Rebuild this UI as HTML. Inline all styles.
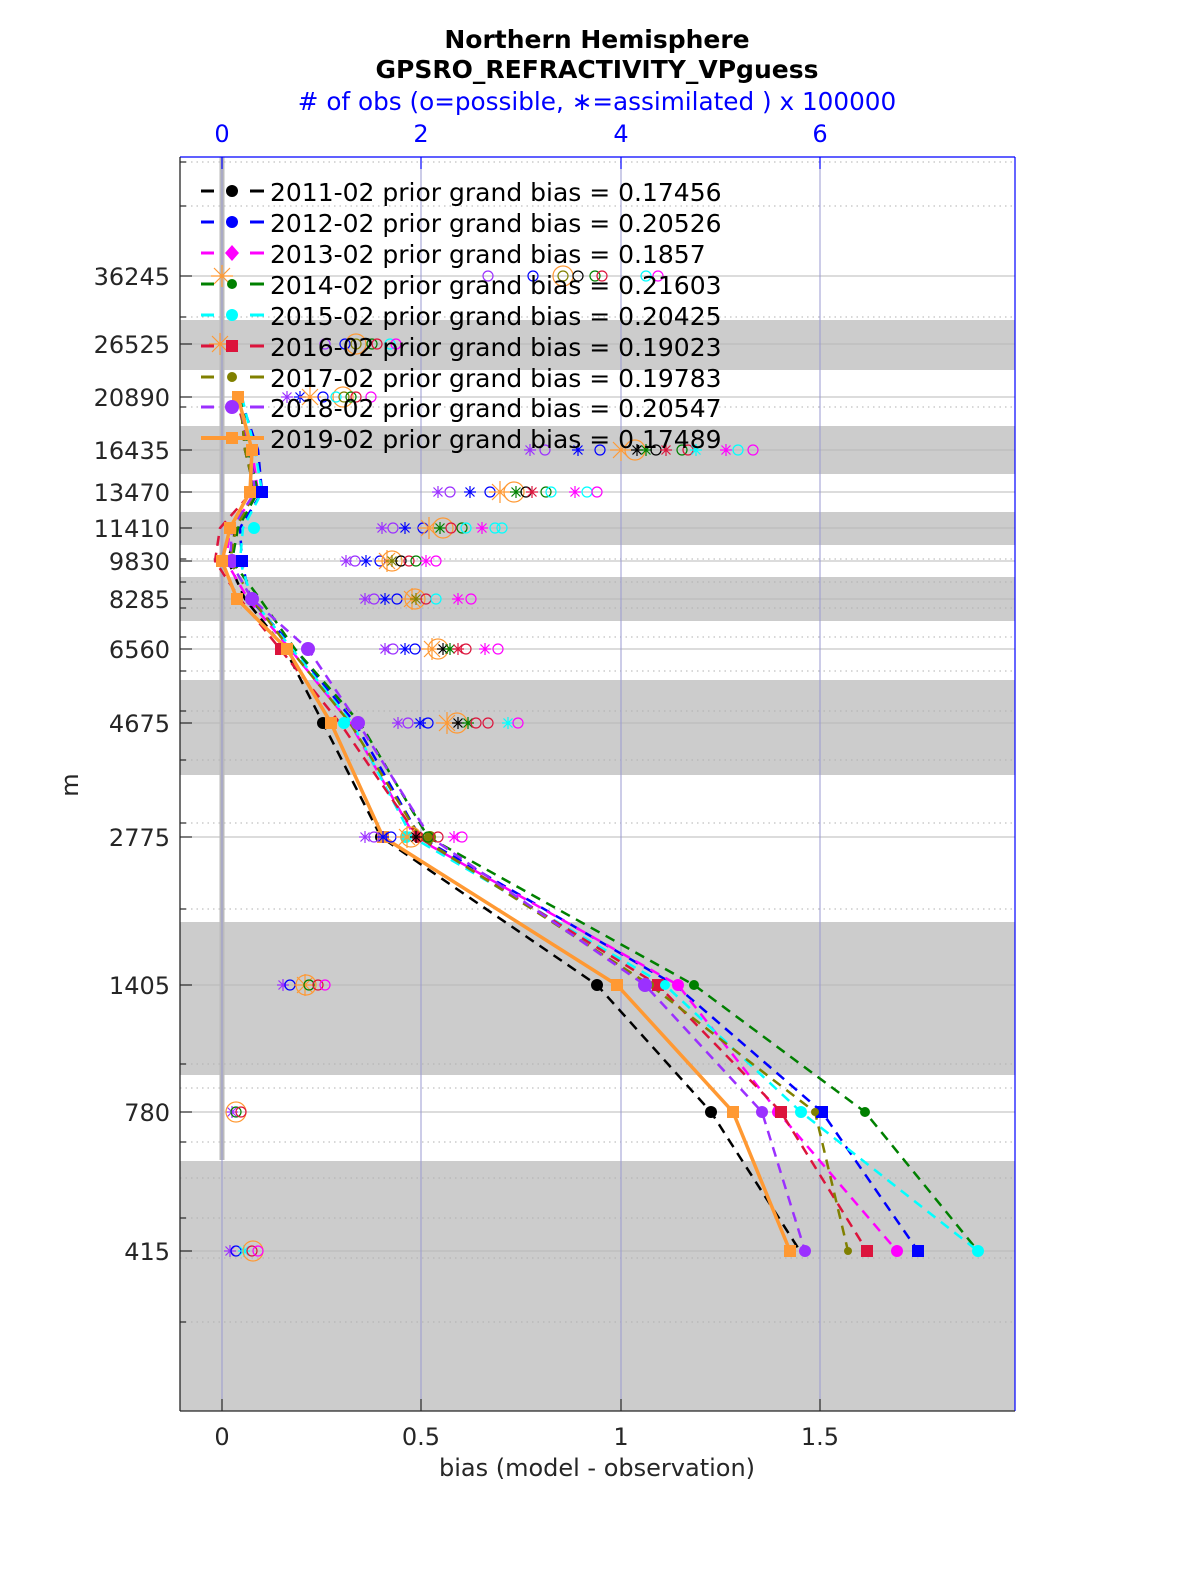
<!DOCTYPE html>
<html><head><meta charset="utf-8"><style>
html,body{margin:0;padding:0;background:#fff;width:1200px;height:1575px;overflow:hidden}
svg{display:block}
svg text{font-family:"DejaVu Sans","Liberation Sans",sans-serif}
</style></head><body>
<svg width="1200" height="1575" viewBox="0 0 1200 1575" xmlns="http://www.w3.org/2000/svg">
<defs>
<symbol id="o" viewBox="-6 -6 12 12" overflow="visible"><circle r="5" fill="none" stroke="currentColor" stroke-width="1.2"/></symbol>
<symbol id="O" viewBox="-11 -11 22 22" overflow="visible"><circle r="10" fill="none" stroke="currentColor" stroke-width="1.2"/></symbol>
<symbol id="s" viewBox="-6 -6 12 12" overflow="visible"><path d="M-6 0H6M0-6V6M-4.5-4.5L4.5 4.5M-4.5 4.5L4.5-4.5" stroke="currentColor" stroke-width="1.2"/></symbol>
<symbol id="S" viewBox="-12 -12 24 24" overflow="visible"><path d="M-11 0H11M0-11V11M-8-8L8 8M-8 8L8-8" stroke="currentColor" stroke-width="1.2"/></symbol>
</defs>
<text x="597" y="48" font-size="25" font-weight="bold" text-anchor="middle">Northern Hemisphere</text>
<text x="597" y="78" font-size="25" font-weight="bold" text-anchor="middle">GPSRO_REFRACTIVITY_VPguess</text>
<text x="597" y="110" font-size="24.7" fill="#0000ff" text-anchor="middle"># of obs (o=possible, ∗=assimilated ) x 100000</text>
<g fill="#0000ff" font-size="24" text-anchor="middle">
<text x="222" y="142">0</text><text x="421" y="142">2</text><text x="621" y="142">4</text><text x="820" y="142">6</text></g>
<rect x="180" y="157" width="835" height="1254" fill="#fff"/>
<g fill="#cccccc">
<rect x="180" y="320" width="835" height="50"/><rect x="180" y="426" width="835" height="48"/>
<rect x="180" y="512" width="835" height="33"/><rect x="180" y="577" width="835" height="44"/>
<rect x="180" y="680" width="835" height="95"/><rect x="180" y="922" width="835" height="153"/>
<rect x="180" y="1161" width="835" height="250"/></g>
<g stroke="#b0b0b0" stroke-width="1" stroke-dasharray="1.5,4">
<line x1="180" x2="1015" y1="162" y2="162"/><line x1="180" x2="1015" y1="206" y2="206"/>
<line x1="180" x2="1015" y1="317" y2="317"/><line x1="180" x2="1015" y1="407" y2="407"/>
<line x1="180" x2="1015" y1="559" y2="559"/><line x1="180" x2="1015" y1="582" y2="582"/>
<line x1="180" x2="1015" y1="608" y2="608"/><line x1="180" x2="1015" y1="637" y2="637"/>
<line x1="180" x2="1015" y1="671" y2="671"/><line x1="180" x2="1015" y1="711" y2="711"/>
<line x1="180" x2="1015" y1="760" y2="760"/><line x1="180" x2="1015" y1="823" y2="823"/>
<line x1="180" x2="1015" y1="909" y2="909"/><line x1="180" x2="1015" y1="1064" y2="1064"/>
<line x1="180" x2="1015" y1="1088" y2="1088"/><line x1="180" x2="1015" y1="1142" y2="1142"/>
<line x1="180" x2="1015" y1="1178" y2="1178"/><line x1="180" x2="1015" y1="1218" y2="1218"/>
<line x1="180" x2="1015" y1="1258" y2="1258"/><line x1="180" x2="1015" y1="1322" y2="1322"/></g>
<g stroke="#b8b8b8" stroke-width="1">
<line x1="180" x2="1015" y1="276" y2="276"/><line x1="180" x2="1015" y1="344" y2="344"/>
<line x1="180" x2="1015" y1="397" y2="397"/><line x1="180" x2="1015" y1="450" y2="450"/>
<line x1="180" x2="1015" y1="492" y2="492"/><line x1="180" x2="1015" y1="528" y2="528"/>
<line x1="180" x2="1015" y1="561" y2="561"/><line x1="180" x2="1015" y1="599" y2="599"/>
<line x1="180" x2="1015" y1="649" y2="649"/><line x1="180" x2="1015" y1="723" y2="723"/>
<line x1="180" x2="1015" y1="837" y2="837"/><line x1="180" x2="1015" y1="985" y2="985"/>
<line x1="180" x2="1015" y1="1112" y2="1112"/><line x1="180" x2="1015" y1="1251" y2="1251"/></g>
<g stroke="#9a9ad0" stroke-width="1">
<line x1="421" x2="421" y1="157" y2="1411"/><line x1="621" x2="621" y1="157" y2="1411"/><line x1="820" x2="820" y1="157" y2="1411"/><line x1="222" x2="222" y1="157" y2="1411"/></g>
<line x1="222" x2="222" y1="157" y2="1160" stroke="#bbbbbb" stroke-width="5"/>
<line x1="222" x2="222" y1="157" y2="1160" stroke="#9a9ad0" stroke-width="1"/>
<g fill="none" stroke-width="2.5" stroke-dasharray="10,7">
<polyline stroke="#000" points="240,397 245,450 255,492 236,528 228,561 245,599 285,649 323,723 381,837 597,985 711,1112 800,1251"/>
<polyline stroke="#0000ff" points="240,397 258,450 262,492 240,528 242,561 250,599 295,649 355,723 420,837 675,985 822,1112 918,1251"/>
<polyline stroke="#ff00ff" points="238,397 252,450 258,492 230,528 226,561 248,599 290,649 350,723 415,837 678,985 778,1112 897,1251"/>
<polyline stroke="#008000" points="242,397 248,450 258,492 238,528 232,561 260,599 295,649 360,723 428,837 694,985 865,1112 978,1251"/>
<polyline stroke="#00ffff" points="242,397 255,450 262,492 243,528 240,561 252,599 292,649 352,723 412,837 665,985 801,1112 978,1251"/>
<polyline stroke="#dc143c" points="236,397 250,450 252,492 220,528 215,561 240,599 280,649 340,723 418,837 658,985 781,1112 867,1251"/>
<polyline stroke="#808000" points="240,397 245,450 255,492 236,528 230,561 252,599 290,649 350,723 420,837 650,985 815,1112 848,1251"/>
<polyline stroke="#9b30ff" points="238,397 250,450 255,492 232,528 230,561 252,599 308,649 358,723 430,837 645,985 762,1112 805,1251"/>
</g>
<polyline fill="none" stroke="#ff9933" stroke-width="3.5" points="238,397 252,450 250,492 230,528 222,561 237,599 287,649 331,723 383,837 617,985 733,1112 790,1251"/>
<g>
<circle cx="711" cy="1112" r="6"/><circle cx="597" cy="985" r="6"/><circle cx="323" cy="723" r="6"/><circle cx="381" cy="837" r="6"/>
<rect x="816" y="1106" width="12" height="12" fill="#0000ff"/><rect x="912" y="1245" width="12" height="12" fill="#0000ff"/>
<circle cx="678" cy="985" r="6" fill="#ff00ff"/><circle cx="778" cy="1112" r="6" fill="#ff00ff"/><circle cx="897" cy="1251" r="6" fill="#ff00ff"/>
<rect x="652" y="979" width="12" height="12" fill="#dc143c"/><rect x="775" y="1106" width="12" height="12" fill="#dc143c"/><rect x="861" y="1245" width="12" height="12" fill="#dc143c"/>
<rect x="275" y="643" width="12" height="12" fill="#dc143c"/>
<circle cx="801" cy="1112" r="6" fill="#00ffff"/><circle cx="978" cy="1251" r="6" fill="#00ffff"/><circle cx="665" cy="985" r="5" fill="#00ffff"/>
<circle cx="694" cy="985" r="5" fill="#008000"/><circle cx="865" cy="1112" r="5" fill="#008000"/>
<circle cx="815" cy="1112" r="4" fill="#808000"/><circle cx="848" cy="1251" r="4" fill="#808000"/><circle cx="650" cy="985" r="4" fill="#808000"/>
<circle cx="645" cy="985" r="7" fill="#9b30ff"/><circle cx="762" cy="1112" r="6" fill="#9b30ff"/><circle cx="805" cy="1251" r="6" fill="#9b30ff"/>
<circle cx="308" cy="649" r="7" fill="#9b30ff"/><circle cx="358" cy="723" r="7" fill="#9b30ff"/><circle cx="252" cy="599" r="7" fill="#9b30ff"/><circle cx="232" cy="561" r="7" fill="#9b30ff"/>
<rect x="784" y="1245" width="12" height="12" fill="#ff9933"/><rect x="727" y="1106" width="12" height="12" fill="#ff9933"/><rect x="611" y="979" width="12" height="12" fill="#ff9933"/>
<rect x="377" y="831" width="12" height="12" fill="#ff9933"/><rect x="325" y="717" width="12" height="12" fill="#ff9933"/><rect x="281" y="643" width="12" height="12" fill="#ff9933"/>
<rect x="231" y="593" width="12" height="12" fill="#ff9933"/><rect x="216" y="555" width="12" height="12" fill="#ff9933"/><rect x="224" y="522" width="12" height="12" fill="#ff9933"/>
<rect x="244" y="486" width="12" height="12" fill="#ff9933"/><rect x="246" y="444" width="12" height="12" fill="#ff9933"/><rect x="232" y="391" width="12" height="12" fill="#ff9933"/>
<rect x="236" y="555" width="12" height="12" fill="#0000ff"/><rect x="256" y="486" width="12" height="12" fill="#0000ff"/>
<circle cx="254" cy="528" r="6" fill="#00ffff"/><circle cx="344" cy="723" r="6" fill="#00ffff"/><circle cx="406" cy="837" r="6" fill="#00ffff"/>
<circle cx="430" cy="837" r="6" fill="#808000"/><circle cx="418" cy="837" r="6" fill="#dc143c"/>
</g>
<g font-size="0">
<g transform="translate(0,276)"><use href="#o" x="482" y="-6" width="12" height="12" style="color:#9b30ff"/><use href="#o" x="527" y="-6" width="12" height="12" style="color:#00f"/><use href="#O" x="552" y="-11" width="22" height="22" style="color:#ff9933"/><use href="#o" x="557" y="-6" width="12" height="12" style="color:#808000"/><use href="#o" x="572" y="-6" width="12" height="12" style="color:#000"/><use href="#o" x="589" y="-6" width="12" height="12" style="color:#008000"/><use href="#o" x="596" y="-6" width="12" height="12" style="color:#dc143c"/><use href="#o" x="640" y="-6" width="12" height="12" style="color:#0ff"/><use href="#o" x="652" y="-6" width="12" height="12" style="color:#f0f"/><use href="#S" x="210" y="-12" width="24" height="24" style="color:#ff9933"/></g>
<g transform="translate(0,344)"><use href="#o" x="319" y="-6" width="12" height="12" style="color:#9b30ff"/><use href="#o" x="339" y="-6" width="12" height="12" style="color:#00f"/><use href="#O" x="345" y="-11" width="22" height="22" style="color:#ff9933"/><use href="#o" x="350" y="-6" width="12" height="12" style="color:#808000"/><use href="#o" x="366" y="-6" width="12" height="12" style="color:#008000"/><use href="#o" x="371" y="-6" width="12" height="12" style="color:#dc143c"/><use href="#o" x="384" y="-6" width="12" height="12" style="color:#0ff"/><use href="#o" x="390" y="-6" width="12" height="12" style="color:#f0f"/><use href="#S" x="208" y="-12" width="24" height="24" style="color:#ff9933"/></g>
<g transform="translate(0,397)"><use href="#s" x="281" y="-6" width="12" height="12" style="color:#9b30ff"/><use href="#s" x="294" y="-6" width="12" height="12" style="color:#00f"/><use href="#S" x="298" y="-12" width="24" height="24" style="color:#ff9933"/><use href="#O" x="332" y="-11" width="22" height="22" style="color:#ff9933"/><use href="#o" x="317" y="-6" width="12" height="12" style="color:#00f"/><use href="#o" x="330" y="-6" width="12" height="12" style="color:#0ff"/><use href="#o" x="338" y="-6" width="12" height="12" style="color:#808000"/><use href="#o" x="345" y="-6" width="12" height="12" style="color:#008000"/><use href="#o" x="350" y="-6" width="12" height="12" style="color:#dc143c"/><use href="#o" x="365" y="-6" width="12" height="12" style="color:#f0f"/></g>
<g transform="translate(0,450)"><use href="#s" x="524" y="-6" width="12" height="12" style="color:#9b30ff"/><use href="#o" x="539" y="-6" width="12" height="12" style="color:#9b30ff"/><use href="#s" x="572" y="-6" width="12" height="12" style="color:#00f"/><use href="#o" x="594" y="-6" width="12" height="12" style="color:#00f"/><use href="#S" x="609" y="-12" width="24" height="24" style="color:#ff9933"/><use href="#O" x="624" y="-11" width="22" height="22" style="color:#ff9933"/><use href="#s" x="631" y="-6" width="12" height="12" style="color:#000"/><use href="#s" x="640" y="-6" width="12" height="12" style="color:#008000"/><use href="#o" x="650" y="-6" width="12" height="12" style="color:#000"/><use href="#s" x="660" y="-6" width="12" height="12" style="color:#dc143c"/><use href="#o" x="676" y="-6" width="12" height="12" style="color:#008000"/><use href="#o" x="682" y="-6" width="12" height="12" style="color:#dc143c"/><use href="#s" x="690" y="-6" width="12" height="12" style="color:#0ff"/><use href="#s" x="720" y="-6" width="12" height="12" style="color:#f0f"/><use href="#o" x="732" y="-6" width="12" height="12" style="color:#0ff"/><use href="#o" x="747" y="-6" width="12" height="12" style="color:#f0f"/></g>
<g transform="translate(0,492)"><use href="#s" x="432" y="-6" width="12" height="12" style="color:#9b30ff"/><use href="#o" x="444" y="-6" width="12" height="12" style="color:#9b30ff"/><use href="#s" x="464" y="-6" width="12" height="12" style="color:#00f"/><use href="#o" x="484" y="-6" width="12" height="12" style="color:#00f"/><use href="#S" x="488" y="-12" width="24" height="24" style="color:#ff9933"/><use href="#O" x="503" y="-11" width="22" height="22" style="color:#ff9933"/><use href="#s" x="510" y="-6" width="12" height="12" style="color:#008000"/><use href="#o" x="520" y="-6" width="12" height="12" style="color:#000"/><use href="#s" x="526" y="-6" width="12" height="12" style="color:#dc143c"/><use href="#o" x="540" y="-6" width="12" height="12" style="color:#008000"/><use href="#o" x="545" y="-6" width="12" height="12" style="color:#0ff"/><use href="#s" x="569" y="-6" width="12" height="12" style="color:#f0f"/><use href="#o" x="581" y="-6" width="12" height="12" style="color:#0ff"/><use href="#o" x="591" y="-6" width="12" height="12" style="color:#f0f"/></g>
<g transform="translate(0,528)"><use href="#s" x="376" y="-6" width="12" height="12" style="color:#9b30ff"/><use href="#o" x="387" y="-6" width="12" height="12" style="color:#9b30ff"/><use href="#s" x="399" y="-6" width="12" height="12" style="color:#00f"/><use href="#o" x="417" y="-6" width="12" height="12" style="color:#00f"/><use href="#S" x="417" y="-12" width="24" height="24" style="color:#ff9933"/><use href="#O" x="432" y="-11" width="22" height="22" style="color:#ff9933"/><use href="#s" x="434" y="-6" width="12" height="12" style="color:#008000"/><use href="#o" x="445" y="-6" width="12" height="12" style="color:#dc143c"/><use href="#o" x="456" y="-6" width="12" height="12" style="color:#008000"/><use href="#o" x="460" y="-6" width="12" height="12" style="color:#0ff"/><use href="#s" x="476" y="-6" width="12" height="12" style="color:#f0f"/><use href="#o" x="489" y="-6" width="12" height="12" style="color:#0ff"/><use href="#o" x="496" y="-6" width="12" height="12" style="color:#0ff"/></g>
<g transform="translate(0,561)"><use href="#s" x="340" y="-6" width="12" height="12" style="color:#9b30ff"/><use href="#o" x="349" y="-6" width="12" height="12" style="color:#9b30ff"/><use href="#s" x="360" y="-6" width="12" height="12" style="color:#00f"/><use href="#o" x="374" y="-6" width="12" height="12" style="color:#00f"/><use href="#S" x="375" y="-12" width="24" height="24" style="color:#ff9933"/><use href="#O" x="381" y="-11" width="22" height="22" style="color:#ff9933"/><use href="#s" x="386" y="-6" width="12" height="12" style="color:#808000"/><use href="#o" x="395" y="-6" width="12" height="12" style="color:#000"/><use href="#o" x="403" y="-6" width="12" height="12" style="color:#dc143c"/><use href="#o" x="410" y="-6" width="12" height="12" style="color:#008000"/><use href="#s" x="420" y="-6" width="12" height="12" style="color:#f0f"/><use href="#o" x="430" y="-6" width="12" height="12" style="color:#f0f"/></g>
<g transform="translate(0,599)"><use href="#s" x="359" y="-6" width="12" height="12" style="color:#9b30ff"/><use href="#o" x="368" y="-6" width="12" height="12" style="color:#9b30ff"/><use href="#s" x="379" y="-6" width="12" height="12" style="color:#00f"/><use href="#o" x="391" y="-6" width="12" height="12" style="color:#00f"/><use href="#S" x="400" y="-12" width="24" height="24" style="color:#ff9933"/><use href="#O" x="404" y="-11" width="22" height="22" style="color:#ff9933"/><use href="#s" x="410" y="-6" width="12" height="12" style="color:#808000"/><use href="#o" x="420" y="-6" width="12" height="12" style="color:#dc143c"/><use href="#o" x="430" y="-6" width="12" height="12" style="color:#0ff"/><use href="#s" x="452" y="-6" width="12" height="12" style="color:#f0f"/><use href="#o" x="465" y="-6" width="12" height="12" style="color:#f0f"/></g>
<g transform="translate(0,649)"><use href="#s" x="379" y="-6" width="12" height="12" style="color:#9b30ff"/><use href="#o" x="387" y="-6" width="12" height="12" style="color:#9b30ff"/><use href="#s" x="399" y="-6" width="12" height="12" style="color:#00f"/><use href="#o" x="409" y="-6" width="12" height="12" style="color:#00f"/><use href="#S" x="420" y="-12" width="24" height="24" style="color:#ff9933"/><use href="#O" x="427" y="-11" width="22" height="22" style="color:#ff9933"/><use href="#s" x="437" y="-6" width="12" height="12" style="color:#000"/><use href="#s" x="444" y="-6" width="12" height="12" style="color:#008000"/><use href="#s" x="452" y="-6" width="12" height="12" style="color:#dc143c"/><use href="#o" x="460" y="-6" width="12" height="12" style="color:#dc143c"/><use href="#s" x="479" y="-6" width="12" height="12" style="color:#f0f"/><use href="#o" x="492" y="-6" width="12" height="12" style="color:#f0f"/></g>
<g transform="translate(0,723)"><use href="#s" x="392" y="-6" width="12" height="12" style="color:#9b30ff"/><use href="#o" x="402" y="-6" width="12" height="12" style="color:#9b30ff"/><use href="#s" x="414" y="-6" width="12" height="12" style="color:#00f"/><use href="#o" x="422" y="-6" width="12" height="12" style="color:#00f"/><use href="#S" x="435" y="-12" width="24" height="24" style="color:#ff9933"/><use href="#O" x="446" y="-11" width="22" height="22" style="color:#ff9933"/><use href="#s" x="452" y="-6" width="12" height="12" style="color:#000"/><use href="#s" x="462" y="-6" width="12" height="12" style="color:#008000"/><use href="#o" x="470" y="-6" width="12" height="12" style="color:#dc143c"/><use href="#o" x="482" y="-6" width="12" height="12" style="color:#dc143c"/><use href="#s" x="502" y="-6" width="12" height="12" style="color:#0ff"/><use href="#o" x="512" y="-6" width="12" height="12" style="color:#f0f"/></g>
<g transform="translate(0,837)"><use href="#s" x="359" y="-6" width="12" height="12" style="color:#9b30ff"/><use href="#o" x="368" y="-6" width="12" height="12" style="color:#9b30ff"/><use href="#s" x="377" y="-6" width="12" height="12" style="color:#00f"/><use href="#o" x="385" y="-6" width="12" height="12" style="color:#00f"/><use href="#S" x="395" y="-12" width="24" height="24" style="color:#ff9933"/><use href="#O" x="400" y="-11" width="22" height="22" style="color:#ff9933"/><use href="#s" x="410" y="-6" width="12" height="12" style="color:#000"/><use href="#o" x="422" y="-6" width="12" height="12" style="color:#008000"/><use href="#o" x="432" y="-6" width="12" height="12" style="color:#dc143c"/><use href="#s" x="448" y="-6" width="12" height="12" style="color:#f0f"/><use href="#o" x="456" y="-6" width="12" height="12" style="color:#f0f"/></g>
<g transform="translate(0,985)"><use href="#s" x="277" y="-6" width="12" height="12" style="color:#9b30ff"/><use href="#o" x="284" y="-6" width="12" height="12" style="color:#00f"/><use href="#S" x="293" y="-12" width="24" height="24" style="color:#ff9933"/><use href="#O" x="295" y="-11" width="22" height="22" style="color:#ff9933"/><use href="#o" x="303" y="-6" width="12" height="12" style="color:#008000"/><use href="#o" x="312" y="-6" width="12" height="12" style="color:#dc143c"/><use href="#o" x="319" y="-6" width="12" height="12" style="color:#f0f"/></g>
<g transform="translate(0,1112)"><use href="#s" x="226" y="-6" width="12" height="12" style="color:#9b30ff"/><use href="#o" x="230" y="-6" width="12" height="12" style="color:#008000"/><use href="#O" x="225" y="-11" width="22" height="22" style="color:#ff9933"/><use href="#o" x="235" y="-6" width="12" height="12" style="color:#dc143c"/></g>
<g transform="translate(0,1251)"><use href="#s" x="224" y="-6" width="12" height="12" style="color:#9b30ff"/><use href="#o" x="230" y="-6" width="12" height="12" style="color:#00f"/><use href="#s" x="238" y="-6" width="12" height="12" style="color:#0ff"/><use href="#O" x="242" y="-11" width="22" height="22" style="color:#ff9933"/><use href="#o" x="246" y="-6" width="12" height="12" style="color:#dc143c"/><use href="#o" x="252" y="-6" width="12" height="12" style="color:#f0f"/></g>
</g>
<g font-size="25" fill="#000">
<g stroke-width="3"><line x1="201" x2="214" y1="191" y2="191" stroke="#000"/><line x1="250" x2="264" y1="191" y2="191" stroke="#000"/><circle cx="232" cy="191" r="6"/>
<line x1="201" x2="214" y1="222" y2="222" stroke="#00f"/><line x1="250" x2="264" y1="222" y2="222" stroke="#00f"/><circle cx="232" cy="222" r="6" fill="#00f"/>
<line x1="201" x2="214" y1="253" y2="253" stroke="#f0f"/><line x1="250" x2="264" y1="253" y2="253" stroke="#f0f"/><path d="M232 245l7 8-7 8-7-8z" fill="#f0f"/>
<line x1="201" x2="214" y1="284" y2="284" stroke="#008000"/><line x1="250" x2="264" y1="284" y2="284" stroke="#008000"/><circle cx="232" cy="284" r="5" fill="#008000"/>
<line x1="201" x2="214" y1="315" y2="315" stroke="#0ff"/><line x1="250" x2="264" y1="315" y2="315" stroke="#0ff"/><circle cx="232" cy="315" r="6" fill="#0ff"/>
<line x1="201" x2="214" y1="346" y2="346" stroke="#dc143c"/><line x1="250" x2="264" y1="346" y2="346" stroke="#dc143c"/><rect x="226" y="340" width="12" height="12" fill="#dc143c"/>
<line x1="201" x2="214" y1="377" y2="377" stroke="#808000"/><line x1="250" x2="264" y1="377" y2="377" stroke="#808000"/><circle cx="232" cy="377" r="5" fill="#808000"/>
<line x1="201" x2="214" y1="407" y2="407" stroke="#9b30ff"/><line x1="250" x2="264" y1="407" y2="407" stroke="#9b30ff"/><circle cx="232" cy="407" r="7" fill="#9b30ff"/>
<line x1="201" x2="264" y1="438" y2="438" stroke="#ff9933" stroke-width="4"/><rect x="226" y="432" width="12" height="12" fill="#ff9933"/></g>
<text x="270" y="201">2011-02 prior grand bias = 0.17456</text>
<text x="270" y="232">2012-02 prior grand bias = 0.20526</text>
<text x="270" y="263">2013-02 prior grand bias = 0.1857</text>
<text x="270" y="294">2014-02 prior grand bias = 0.21603</text>
<text x="270" y="325">2015-02 prior grand bias = 0.20425</text>
<text x="270" y="356">2016-02 prior grand bias = 0.19023</text>
<text x="270" y="387">2017-02 prior grand bias = 0.19783</text>
<text x="270" y="417">2018-02 prior grand bias = 0.20547</text>
<text x="270" y="448">2019-02 prior grand bias = 0.17489</text>
</g>
<line x1="180" x2="1015" y1="157" y2="157" stroke="#0000ff" stroke-width="1.2"/>
<line x1="1015" x2="1015" y1="157" y2="1411" stroke="#0000ff" stroke-width="1.2"/>
<line x1="180" x2="180" y1="157" y2="1411" stroke="#262626" stroke-width="1.3"/>
<line x1="180" x2="1015" y1="1411" y2="1411" stroke="#262626" stroke-width="1.3"/>
<g stroke="#262626" stroke-width="1.2">
<line x1="180" x2="192" y1="276" y2="276"/><line x1="180" x2="192" y1="344" y2="344"/><line x1="180" x2="192" y1="397" y2="397"/><line x1="180" x2="192" y1="450" y2="450"/><line x1="180" x2="192" y1="492" y2="492"/><line x1="180" x2="192" y1="528" y2="528"/><line x1="180" x2="192" y1="561" y2="561"/><line x1="180" x2="192" y1="599" y2="599"/><line x1="180" x2="192" y1="649" y2="649"/><line x1="180" x2="192" y1="723" y2="723"/><line x1="180" x2="192" y1="837" y2="837"/><line x1="180" x2="192" y1="985" y2="985"/><line x1="180" x2="192" y1="1112" y2="1112"/><line x1="180" x2="192" y1="1251" y2="1251"/>
<line x1="180" x2="186" y1="162" y2="162"/><line x1="180" x2="186" y1="206" y2="206"/><line x1="180" x2="186" y1="317" y2="317"/><line x1="180" x2="186" y1="407" y2="407"/><line x1="180" x2="186" y1="559" y2="559"/><line x1="180" x2="186" y1="582" y2="582"/><line x1="180" x2="186" y1="608" y2="608"/><line x1="180" x2="186" y1="637" y2="637"/><line x1="180" x2="186" y1="671" y2="671"/><line x1="180" x2="186" y1="711" y2="711"/><line x1="180" x2="186" y1="760" y2="760"/><line x1="180" x2="186" y1="823" y2="823"/><line x1="180" x2="186" y1="909" y2="909"/><line x1="180" x2="186" y1="1064" y2="1064"/><line x1="180" x2="186" y1="1142" y2="1142"/><line x1="180" x2="186" y1="1218" y2="1218"/><line x1="180" x2="186" y1="1322" y2="1322"/>
<line x1="222" x2="222" y1="1399" y2="1411"/><line x1="421" x2="421" y1="1399" y2="1411"/><line x1="621" x2="621" y1="1399" y2="1411"/><line x1="820" x2="820" y1="1399" y2="1411"/></g>
<g stroke="#0000ff" stroke-width="1.2"><line x1="222" x2="222" y1="157" y2="169"/><line x1="421" x2="421" y1="157" y2="169"/><line x1="621" x2="621" y1="157" y2="169"/><line x1="820" x2="820" y1="157" y2="169"/></g>
<g font-size="24" fill="#262626" text-anchor="end">
<text x="170" y="285">36245</text><text x="170" y="353">26525</text><text x="170" y="406">20890</text><text x="170" y="459">16435</text><text x="170" y="501">13470</text><text x="170" y="537">11410</text><text x="170" y="570">9830</text><text x="170" y="608">8285</text><text x="170" y="658">6560</text><text x="170" y="732">4675</text><text x="170" y="846">2775</text><text x="170" y="994">1405</text><text x="170" y="1121">780</text><text x="170" y="1260">415</text></g>
<g font-size="24" fill="#262626" text-anchor="middle">
<text x="222" y="1445">0</text><text x="421" y="1445">0.5</text><text x="621" y="1445">1</text><text x="820" y="1445">1.5</text>
<text x="597" y="1476">bias (model - observation)</text></g>
<text transform="translate(78,785) rotate(-90)" font-size="24" fill="#262626" text-anchor="middle">m</text>
</svg>
</body></html>
